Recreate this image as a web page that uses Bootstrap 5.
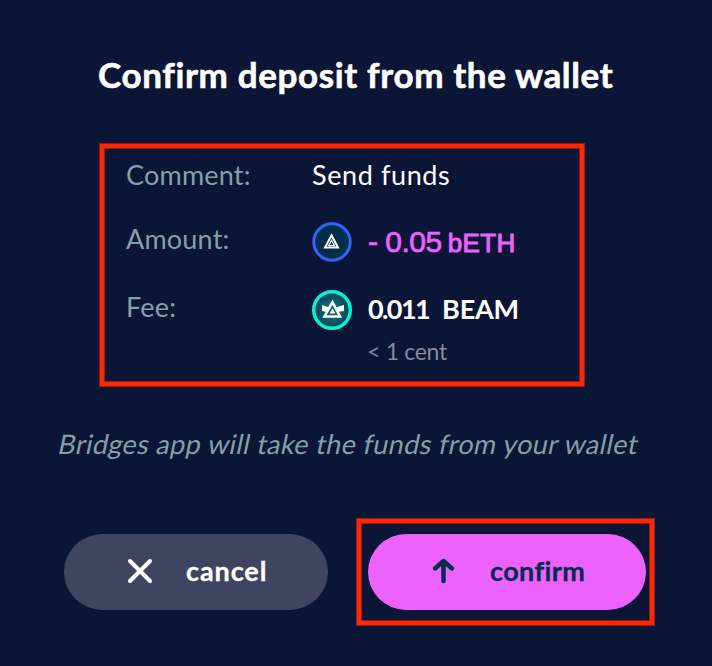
<!DOCTYPE html>
<html lang="en">
<head>
<meta charset="utf-8">
<meta name="viewport" content="width=device-width, initial-scale=1">
<title>Confirm deposit</title>
<link href="https://cdn.jsdelivr.net/npm/bootstrap@5.3.0/dist/css/bootstrap.min.css" rel="stylesheet">
<style>
body{background:#0b1535;font-family:Lato,"Liberation Sans",sans-serif;font-size:27px;line-height:34px;color:#fff}
.dialog{width:712px;height:666px;overflow:hidden;white-space:nowrap}
.title{font-size:35px;line-height:44px;font-weight:700;letter-spacing:.63px;-webkit-text-stroke:.6px;margin:52px 0 0 98px}
.red-frame{border:4px solid #ff2600;outline:1px solid #941c1a;box-shadow:inset 0 0 0 1px #941c1a}
.details{width:484px;height:242px;margin:48px 0 0 100px;padding:10px 0 0 22px}
.label-col{width:186px;color:#869fa9}
.label-col span{letter-spacing:.2px}
.send{letter-spacing:.6px}
.row-amount{margin-top:28px}
.row-fee{margin-top:26px}
.row-amount .label-col,.row-fee .label-col{padding-top:2px}
.token{width:40px;height:40px;margin:2px 16px 0 0;flex:none}
.pink{color:#ed61ff}
.amount{margin:5px 0 -1px}
.fee{margin-top:4px}
.digits{font-family:"Liberation Sans",sans-serif;font-size:30px;letter-spacing:-.5px;-webkit-text-stroke:.7px}
.unit{font-family:"Liberation Sans",sans-serif;font-size:26px;letter-spacing:.4px;margin-left:6px;-webkit-text-stroke:1px}
.num{letter-spacing:-1.6px}
.beam{margin-left:13px;letter-spacing:-.2px}
.cent{font-size:23px;line-height:28px;color:#858a9a;margin:7px 0 0 55px;letter-spacing:-.3px}
.note{color:#869fa9;margin:41px 0 0 59px}
.note span{display:inline-block;transform:skewX(-12deg);letter-spacing:.36px}
.actions{margin:58px 0 0 64px}
.pill{height:76px;border:0;border-radius:38px;font-size:27px;line-height:34px;font-weight:700;-webkit-text-stroke:.3px}
.pill-cancel{width:264px;margin-top:15px;background:#3f4560;color:#fff;padding:0 0 2px 63px}
.frame{width:297px;height:106px;margin-left:29px;padding:11px 7px}
.pill-confirm{width:278px;background:#ed61ff;color:#032e49;padding:0 0 2px 62px}
.cancel-text{margin-left:33px;letter-spacing:.9px}
.confirm-text{margin-left:34px;letter-spacing:.4px}
</style>
<script src="https://cdn.jsdelivr.net/npm/bootstrap@5.3.0/dist/js/bootstrap.bundle.min.js"></script>
</head>
<body>
<main class="dialog d-flex flex-column align-items-start">
  <h1 class="title">Confirm deposit from the wallet</h1>
  <section class="details red-frame">
    <div class="d-flex"><div class="label-col"><span>Comment:</span></div><span class="send">Send funds</span></div>
    <div class="row-amount d-flex align-items-start">
      <div class="label-col"><span>Amount:</span></div>
      <svg class="token" viewBox="0 0 40 40"><circle cx="20" cy="20" r="18.2" fill="#032e49" stroke="#2f63ff" stroke-width="3"/><path d="M19.5 13.3 26 25.5H13Z" fill="none" stroke="#fff" stroke-width="2"/><path d="M19.5 18.2 22.4 23.6H16.6Z" fill="none" stroke="#fff" stroke-width="1.2"/></svg>
      <div class="amount pink d-flex align-items-baseline"><span class="digits">- 0.05</span><span class="unit">bETH</span></div>
    </div>
    <div class="row-fee d-flex align-items-start">
      <div class="label-col"><span>Fee:</span></div>
      <svg class="token" viewBox="0 0 40 40"><defs><radialGradient id="glow"><stop offset="0" stop-color="#168184"/><stop offset="1" stop-color="#063e57"/></radialGradient></defs><circle cx="20" cy="20" r="18.3" fill="url(#glow)" stroke="#00f6d2" stroke-width="3.4"/><path d="M10 15 20 18.5 32 15V21L25 22H15L10 21Z" fill="#fff"/><path d="M20.5 12.2 28 26.5H12.5Z" fill="#0d5d6b" stroke="#fff" stroke-width="2.5"/><path d="M20.5 18 23.4 23.6H17.6Z" fill="#fff"/></svg>
      <div class="fee fw-bold"><span class="num">0.011</span><span class="beam">BEAM</span></div>
    </div>
    <div class="d-flex"><div class="label-col"></div><div class="cent">&lt; 1 cent</div></div>
  </section>
  <p class="note mb-0"><span>Bridges app will take the funds from your wallet</span></p>
  <div class="actions d-flex align-items-start">
    <button class="btn pill pill-cancel d-flex align-items-center"><svg width="26" height="26" viewBox="0 0 26 26" stroke="#fff" stroke-width="4" stroke-linecap="round"><path d="M3 3 23 23M23 3 3 23"/></svg><span class="cancel-text">cancel</span></button>
    <div class="frame red-frame"><button class="btn pill pill-confirm d-flex align-items-center"><svg width="26" height="26" viewBox="0 0 26 26" fill="none" stroke="#032e49" stroke-width="4.4" stroke-linecap="round" stroke-linejoin="round"><path d="M13.5 23V3M5 10.5 13.5 3 22 10.5"/></svg><span class="confirm-text">confirm</span></button></div>
  </div>
</main>
</body>
</html>
